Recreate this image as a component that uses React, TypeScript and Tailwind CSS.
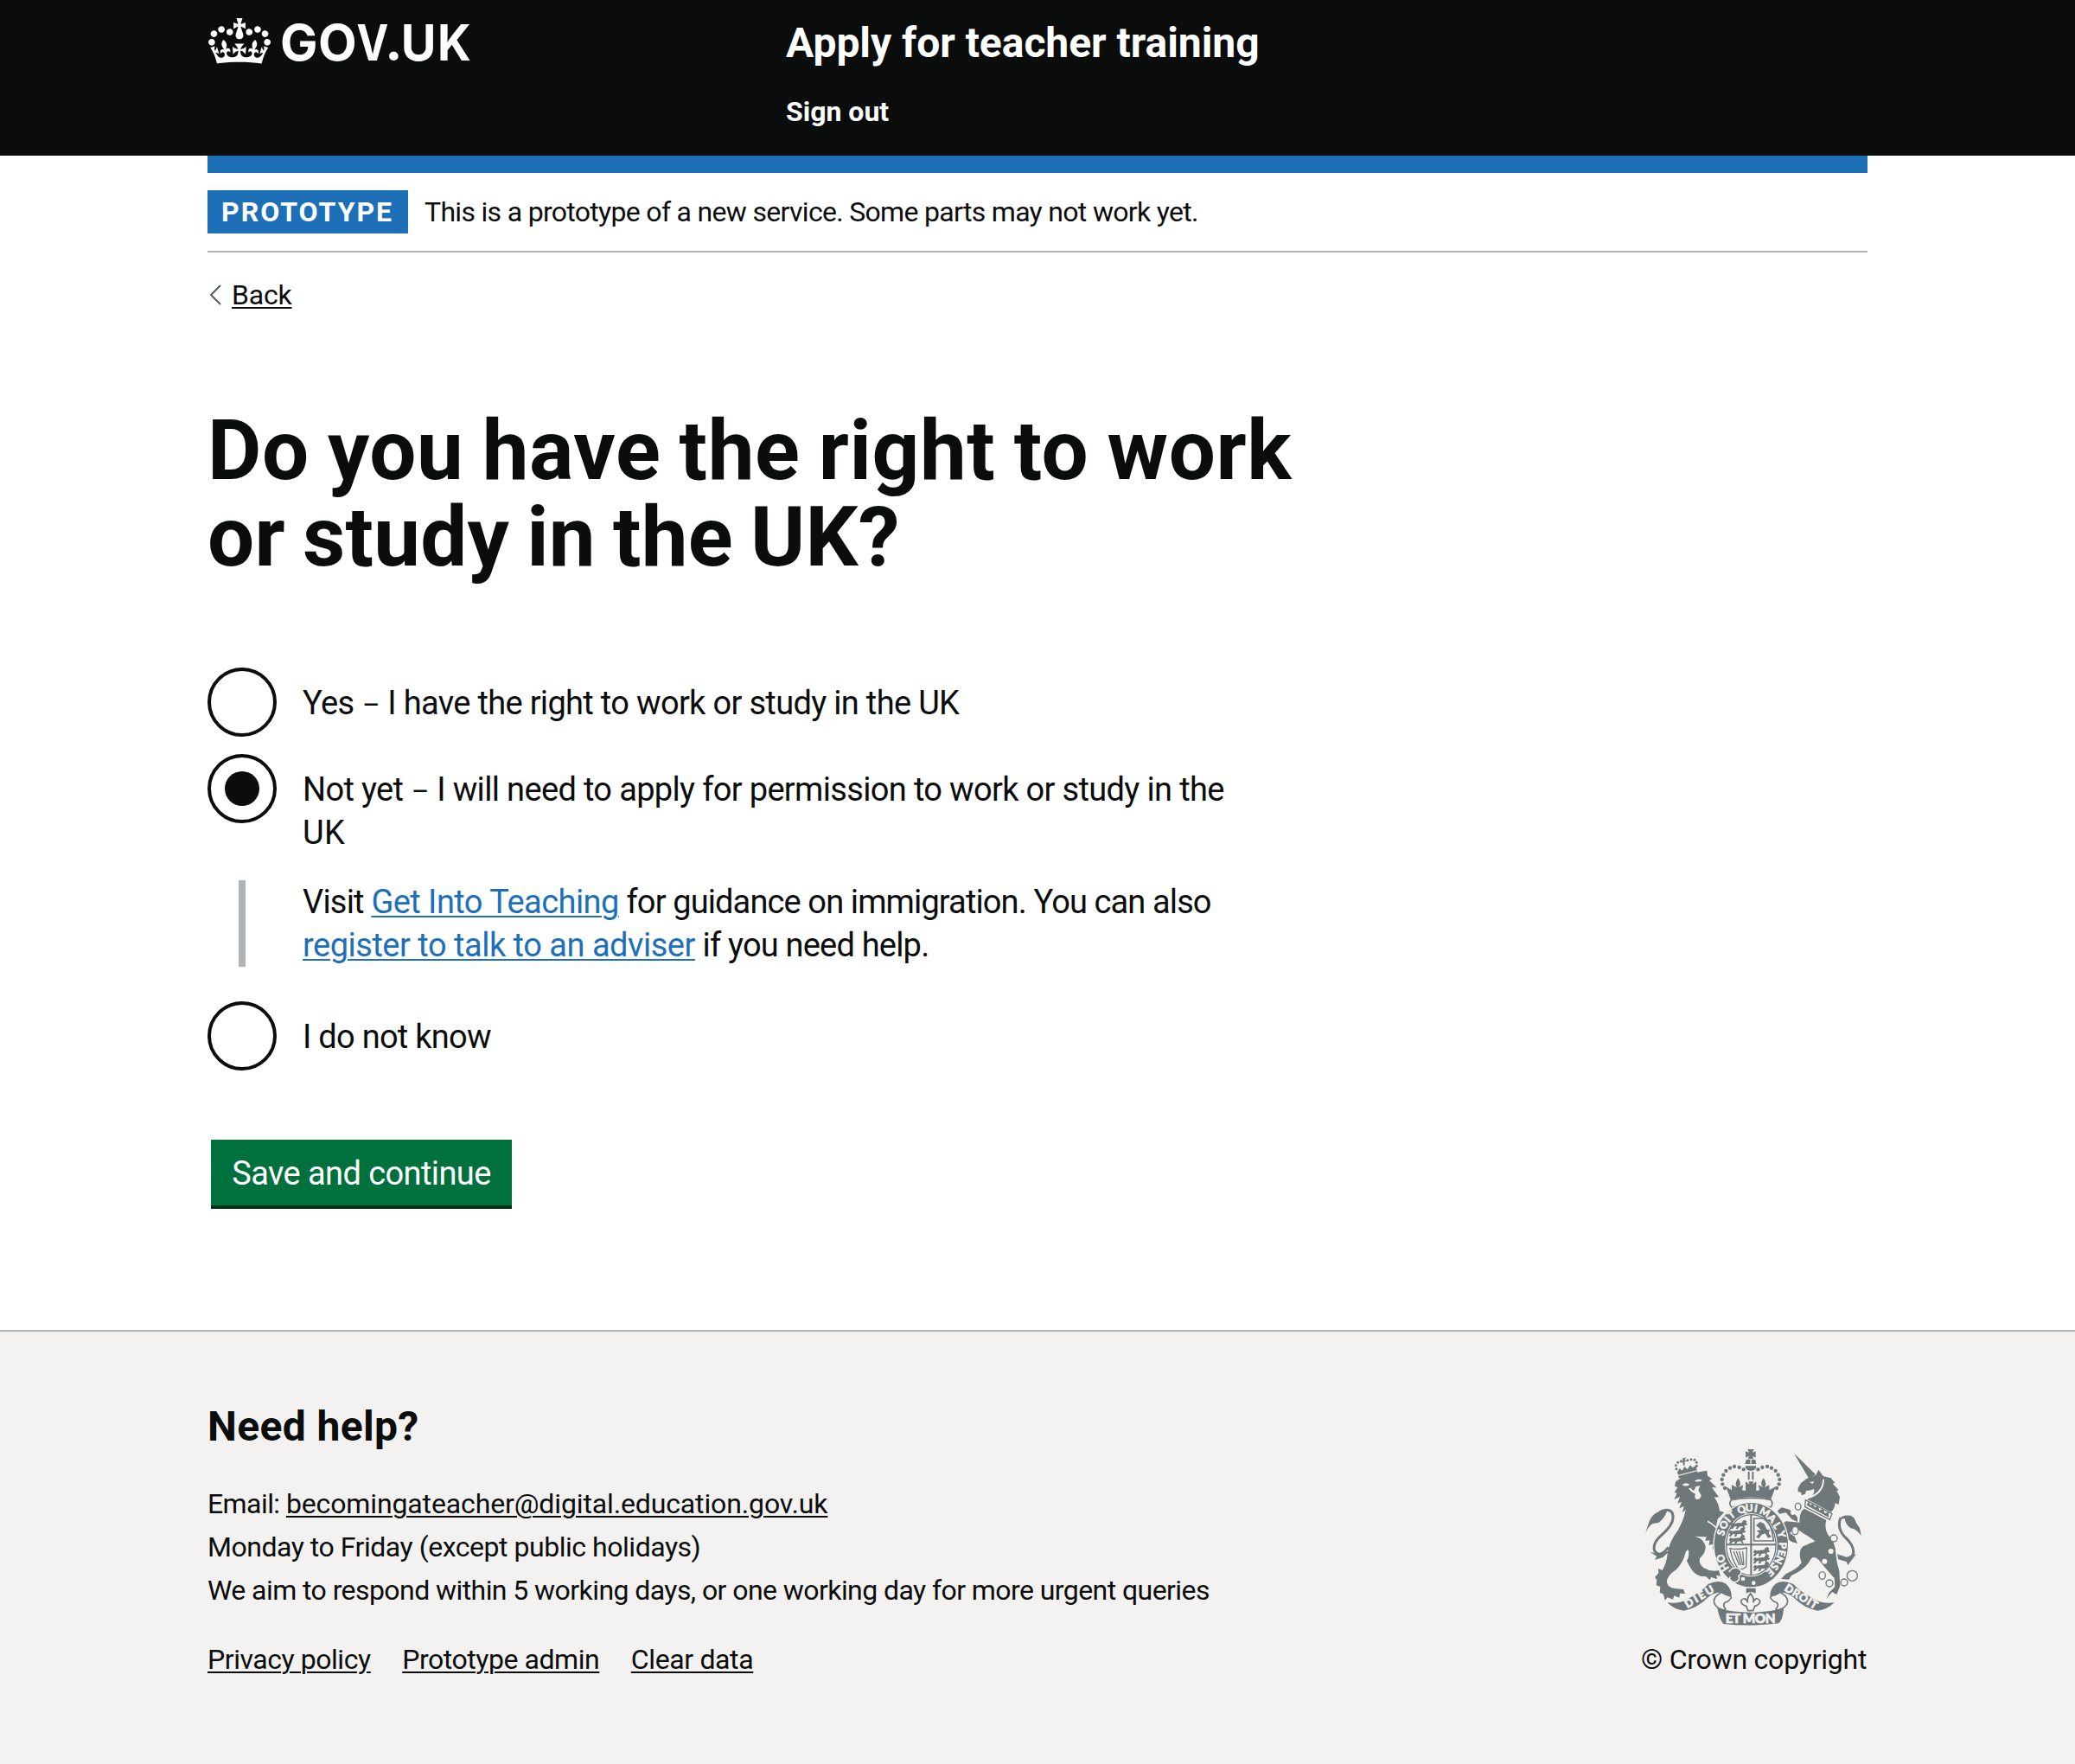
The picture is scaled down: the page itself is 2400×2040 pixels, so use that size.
import type { ReactNode } from "react";

function GovukCrown() {
  return (
    <svg viewBox="0 0 132 97" className="h-[53px] w-[72px]" fill="currentColor" aria-hidden="true">
      <path d="M25 30.2c3.5 1.5 7.7-.2 9.1-3.7 1.5-3.6-.2-7.8-3.9-9.2-3.6-1.4-7.6.3-9.1 3.9-1.4 3.5.3 7.5 3.9 9zM9 39.5c3.6 1.5 7.8-.2 9.2-3.7 1.5-3.6-.2-7.8-3.9-9.1-3.6-1.5-7.6.2-9.1 3.8-1.4 3.5.3 7.5 3.8 9zM4.4 57.2c3.5 1.5 7.7-.2 9.1-3.8 1.5-3.6-.2-7.7-3.9-9.1-3.5-1.5-7.6.3-9.1 3.8-1.4 3.5.3 7.6 3.9 9.1zm38.3-21.4c3.5 1.5 7.7-.2 9.1-3.8 1.5-3.6-.2-7.7-3.9-9.1-3.6-1.5-7.6.3-9.1 3.8-1.3 3.6.4 7.7 3.9 9.1zm64.4-5.6c-3.6 1.5-7.8-.2-9.1-3.7-1.5-3.6.2-7.8 3.8-9.2 3.6-1.4 7.7.3 9.2 3.9 1.3 3.5-.4 7.5-3.9 9zm15.9 9.3c-3.6 1.5-7.7-.2-9.1-3.7-1.5-3.6.2-7.8 3.7-9.1 3.6-1.5 7.7.2 9.2 3.8 1.5 3.5-.3 7.5-3.8 9zm4.7 17.7c-3.6 1.5-7.8-.2-9.2-3.8-1.5-3.6.2-7.7 3.9-9.1 3.6-1.5 7.7.3 9.2 3.8 1.3 3.5-.4 7.6-3.9 9.1zM89.3 35.8c-3.6 1.5-7.8-.2-9.2-3.8-1.4-3.6.2-7.7 3.9-9.1 3.6-1.5 7.7.3 9.2 3.8 1.4 3.6-.3 7.7-3.9 9.1zM69.7 17.7l8.9 4.7V9.3l-8.9 2.8c-.2-.3-.5-.6-.9-.9L72.4 0H59.6l3.5 11.2c-.3.3-.6.5-.9.9l-8.8-2.8v13.1l8.8-4.7c.3.3.6.7.9.9l-5 15.4v.1c-.2.8-.4 1.6-.4 2.4 0 4.1 3.1 7.5 7 8.1h.2c.3 0 .7.1 1 .1.4 0 .7 0 1-.1h.2c4-.6 7.1-4.1 7.1-8.1 0-.8-.1-1.7-.4-2.4V34l-5.1-15.4c.4-.2.7-.6 1-.9zM66 92.8c16.9 0 32.8 1.1 47.1 3.2 4-16.9 8.9-26.7 14-33.5l-9.6-3.4c1 4.9 1.1 7.2 0 10.2-1.5-1.4-3-4.3-4.2-8.7L108.6 76c2.8-2 5-3.2 7.5-3.3-4.4 9.4-10 11.9-13.6 11.2-4.3-.8-6.3-4.6-5.6-7.9 1-4.7 5.7-5.9 8-.5 4.3-8.7-3-11.4-7.6-8.8 7.1-7.2 7.9-13.5 2.1-21.1-8 6.1-8.1 12.3-4.5 20.8-4.7-5.4-12.1-2.5-9.5 6.2 3.4-5.2 7.9-2 7.2 3.1-.6 4.3-6.4 7.8-13.5 7.2-10.3-.9-10.9-8-11.2-13.8 2.5-.5 7.1 1.8 11 7.3L80.2 60c-4.1 4.4-8 5.3-12.3 5.4 1.4-4.4 8-11.6 8-11.6H55.5s6.4 7.2 7.9 11.6c-4.2-.1-8-1-12.3-5.4l1.4 16.4c3.9-5.5 8.5-7.7 10.9-7.3-.3 5.8-.9 12.8-11.1 13.8-7.2.6-12.9-2.9-13.5-7.2-.7-5 3.8-8.3 7.1-3.1 2.7-8.7-4.6-11.6-9.4-6.2 3.7-8.5 3.6-14.7-4.6-20.8-5.8 7.6-5 13.9 2.2 21.1-4.7-2.6-11.9.1-7.7 8.8 2.3-5.5 7.1-4.2 8.1.5.7 3.3-1.3 7.1-5.7 7.9-3.5.7-9-1.8-13.5-11.2 2.5.1 4.7 1.3 7.5 3.3l-4.7-15.4c-1.2 4.4-2.7 7.2-4.3 8.7-1.1-3-.9-5.3 0-10.2l-9.5 3.4c5 6.9 9.9 16.7 14 33.5 14.8-2.1 30.8-3.2 47.7-3.2z" />
    </svg>
  );
}

function GovukWordmark() {
  return (
    <svg
      viewBox="0 0 240 80"
      className="h-20 w-60 overflow-visible"
      fill="currentColor"
      fontFamily="Inter, sans-serif"
      fontWeight="700"
      fontSize="58"
    >
      <text y="49" x="2 46">GO</text>
      <text transform="translate(90.5 49) scale(.85 1)">V</text>
      <text x="125.7" y="49" fontFamily="Lato, sans-serif" fontWeight="900" fontSize="64">.</text>
      <text transform="translate(141.8 49) scale(.96 1)">U</text>
      <text transform="translate(184 49) scale(.93 1)">K</text>
    </svg>
  );
}

// Motto letters round the garter: glyph, centre x, centre y.
const MOTTO: [string, number, number][] = [
  ["H", 345, 457], ["O", 334, 427],
  ["S", 334, 337], ["O", 344, 310], ["I", 357, 291], ["T", 371, 275],
  ["Q", 406, 257], ["U", 433, 251], ["I", 456, 253],
  ["M", 487, 266], ["A", 512, 288], ["L", 530, 313], ["Y", 545, 343],
  ["P", 549, 382], ["E", 545, 408], ["N", 536, 432], ["S", 521, 455], ["E", 506, 475],
];

const CROWN_PEARLS = [
  [413, 118], [398, 111], [381, 108], [366, 113], [352, 123], [343, 137], [338, 153], [340, 169], [348, 183],
];

const LION_CROWN_PEARLS = [
  [188, 128], [180, 116], [178, 104], [185, 94], [196, 89], [219, 86], [231, 83], [243, 85], [250, 94], [250, 106],
];

function Passant({ x, y }: { x: number; y: number }) {
  return (
    <path
      transform={`translate(${x} ${y})`}
      d="M0 6l5-9 8 3 12-2 14-1 3-7 8-3 6 5-3 6 6 3-5 5-5-1-2 6 6 4-7 3-5-9-12 2-4 8-7-1 4-8-8 0-7 9-7-2 5-8z"
      fill="#6e777a"
    />
  );
}

function RoyalArms() {
  const ink = "#6e777a";
  const bg = "#f3f2f1";
  return (
    <svg viewBox="57 45 780 618" className="h-[206px] w-[260px]" fill={ink} aria-hidden="true">
      {/* lion */}
      <path d="M178 160L200 145 262 126 286 122 288 140 304 151 294 156 319 181 303 181 327 214 311 215Q326 232 330 262L346 267 323 290 318 315 334 345 348 375 345 402 318 410 322 398 305 394 308 378 292 380 296 364 280 366 284 352 268 352 244 350Q274 358 281 385 282 408 262 425 255 445 275 460 300 475 327 468L333 488 318 485 322 499 300 492 296 502 283 490 263 488Q240 480 228 458L216 436Q226 418 222 398 214 395 210 412 204 440 180 465 145 488 147 510 150 528 176 531L204 534 210 549 192 548 190 563 172 556 168 569 150 562 140 572 135 551 122 545 124 525 110 520 112 502 105 492 118 478 117 462 131 468Q147 440 149 410 155 368 185 330 207 290 212 258L200 268 206 246 190 253 198 230 184 236 192 213 172 222 182 200 173 198 184 180 174 176Z" />
      <g fill={bg}>
        <path d="M200 172Q212 160 226 170 214 180 200 172ZM243 158Q256 148 270 156 256 164 243 158Z" />
        <path d="M222 184L262 174 256 190 266 208Q264 223 250 222 240 216 246 203L232 196Z" />
      </g>
      <path d="M228 182L248 178 240 192Z" />
      <path d="M288 298Q315 312 345 350" fill="none" stroke={bg} strokeWidth="5" />
      <path d="M152 388Q122 428 104 400 96 374 128 346 180 302 165 268 152 250 120 268" fill="none" stroke={ink} strokeWidth="9" />
      <path d="M72 340L86 298Q98 268 128 261L150 256Q140 288 118 303L98 306Q82 315 72 340ZM88 404L120 412 160 398 132 424 104 432 112 420Z" />
      <path d="M183 128L191 114 200 122 208 108 218 118 228 103 236 112 248 104 251 121 187 137ZM186 141L252 124 254 131 190 149Z" />
      <path d="M200 80L213 76 209 86 218 88 208 92 210 103 203 104 203 94 194 94 203 87Z" />
      {LION_CROWN_PEARLS.map(([x, y]) => <circle key={`${x}-${y}`} cx={x} cy={y} r="4.5" />)}

      {/* unicorn */}
      <path d="M588 62L663 136 640 150Z" />
      <path d="M602 182L612 165 632 150 664 138 673 119 690 142 716 148 730 165 722 167 743 190 736 192 747 214 743 240 731 234Q729 256 716 266L634 222Q662 206 658 186 645 192 630 192L627 203 614 208 613 198 602 195Z" />
      <path d="M642 162L658 160 652 168Z" fill={bg} />
      <path d="M634 217Q690 202 690 152" fill="none" stroke={bg} strokeWidth="6" />
      <path d="M628 224L720 272 712 292 626 248Z" fill={bg} stroke={ink} strokeWidth="4" />
      <path d="M632 242L638 228 645 242 654 236 660 250 672 244 676 260 690 254 694 270 708 266 708 284Z" />
      <path d="M624 254L700 294Q692 322 706 345 732 370 733 410 735 440 745 470L748 522 736 552 720 543 700 567 710 545 730 525 728 495Q704 470 674 432 652 410 640 440 620 468 580 485L570 500 543 498 560 480Q600 464 614 442 600 400 620 385 645 372 662 368 640 350 620 340 600 325 588 316L574 340 590 350 600 375 578 368 560 352 548 335 543 310 560 298 608 302Q605 280 615 262Z" />
      <path d="M530 262L545 250 572 257 590 272 600 284 600 300 580 290 560 268 538 272Z" />
      <path d="M750 285Q736 318 762 350 800 384 793 412 780 438 745 425" fill="none" stroke={ink} strokeWidth="9" />
      <path d="M745 292Q752 274 785 278 800 286 803 302L816 322 821 348Q804 324 785 322 765 308 764 288ZM738 412L770 422 804 412 790 430 775 450 770 438 742 430Z" />
      <g fill="none" stroke={ink} strokeWidth="4">
        <ellipse cx="602" cy="247" rx="10" ry="12" />
        <ellipse cx="592" cy="330" rx="11" ry="14" fill={bg} />
        <circle cx="726" cy="357" r="12" fill={bg} />
        <ellipse cx="686" cy="486" rx="11" ry="13" />
        <circle cx="711" cy="513" r="12" />
        <circle cx="762" cy="510" r="12" />
        <circle cx="790" cy="487" r="18" />
      </g>
      <g fill={bg}>
        <circle cx="716" cy="402" r="9" />
        <circle cx="694" cy="437" r="9" />
        <circle cx="584" cy="268" r="8" />
      </g>

      {/* central crown */}
      <path d="M427 48H449L444 60 455 55V77L444 71 448 82H428L432 71 420 77V55L432 60ZM422 84H454L457 99H418Z" />
      <path d="M436 84h4v14h-4z" fill={bg} />
      <path d="M419 106H457Q457 122 438 123 419 122 419 106ZM428 126h6v28h-6zM442 126h6v28h-6z" />
      {CROWN_PEARLS.map(([x, y]) => (
        <g key={`${x}-${y}`}>
          <circle cx={x} cy={y} r="6.5" />
          <circle cx={876 - x} cy={y} r="6.5" />
        </g>
      ))}
      <path d="M394 148Q408 168 396 180L412 172 408 190 420 192V160L434 170 430 160H448L444 170 457 160V192L468 190 464 172 480 180Q468 168 482 148 496 168 486 180L502 172 502 190 524 178 508 222Q438 206 368 222L352 178 372 190 372 172 390 180Q380 168 394 148Z" />
      <path d="M370 224Q438 210 508 224 518 238 506 250 438 226 372 250 360 238 370 224Z" fill={bg} stroke={ink} strokeWidth="5" />

      {/* garter and shield */}
      <ellipse cx="439" cy="380" rx="132" ry="150" fill={bg} />
      <ellipse cx="439" cy="380" rx="128" ry="146" />
      <ellipse cx="439" cy="380" rx="91" ry="110" fill={bg} />
      <ellipse cx="439" cy="380" rx="86" ry="105" fill="none" stroke={ink} strokeWidth="4" />
      <path d="M436 274h6v212h-6zM352 376h174v6H352z" />
      <Passant x={368} y={306} />
      <Passant x={362} y={332} />
      <Passant x={362} y={358} />
      <Passant x={446} y={400} />
      <Passant x={446} y={426} />
      <Passant x={446} y={452} />
      <path d="M449 288H486Q512 308 517 366H449Z" fill="none" stroke={ink} strokeWidth="5" />
      <path d="M456 312L470 300 484 306 494 326 504 328 500 340 510 352 498 356 488 340 476 344 466 358 456 352 468 340 458 330 474 328Z" />
      <path d="M366 392Q392 398 424 390L422 456Q404 470 392 460 372 430 366 392ZM378 402L398 450M388 402L404 450M398 402L410 450M410 402L414 450" fill="none" stroke={ink} strokeWidth="4" />
      <g fill={bg} stroke={bg} strokeWidth="1.5" fontFamily="Lato, sans-serif" fontWeight="900" fontSize="36" textAnchor="middle">
        {MOTTO.map(([ch, x, y]) => (
          <text
            key={`${x}-${y}`}
            transform={`translate(${x} ${y}) rotate(${(Math.atan2(x - 439, (380 - y) / 1.25) * 180) / Math.PI})`}
            y="13"
          >
            {ch}
          </text>
        ))}
      </g>
      <path d="M362 474Q376 452 400 464 412 476 396 488 404 504 380 510 360 502 366 490" fill={ink} stroke={bg} strokeWidth="5" />
      <circle cx="411" cy="498" r="7" fill={bg} />
      <circle cx="448" cy="512" r="7" fill={bg} />
      <path d="M422 530H455V548Q438 538 422 548Z" />
      <path d="M437 548Q452 566 446 580 456 556 470 574 470 588 452 592L446 608H428L422 592Q404 588 404 574 418 556 428 580 422 566 437 548Z" fill={bg} stroke={ink} strokeWidth="5" />

      {/* ribbon */}
      <path d="M148 580Q190 586 222 566 270 540 290 516 330 498 352 515 372 532 371 562 350 556 332 545 308 545 290 562 250 602 205 608 172 604 148 580Z" />
      <path d="M728 580Q686 586 654 566 606 540 586 516 546 498 524 515 504 532 505 562 526 556 544 545 568 545 586 562 626 602 671 608 704 604 728 580Z" />
      <path d="M334 546Q304 562 312 584 324 606 352 606M371 560Q366 574 348 580 338 590 352 604M542 546Q572 562 564 584 552 606 524 606M505 560Q510 574 528 580 538 590 524 604" fill="none" stroke={ink} strokeWidth="5" />
      <path d="M322 600Q438 628 552 600 550 640 534 652 438 664 343 654 330 640 322 600Z" />
      <g fill={bg} stroke={bg} strokeWidth="2" fontFamily="Lato, sans-serif" fontWeight="900" textAnchor="middle">
        <text x="437" y="650" fontSize="46" textLength="174">ET MON</text>
        <text transform="translate(266 571) rotate(-31)" fontSize="38" textLength="112">DIEU</text>
        <text transform="translate(606 570) rotate(32)" fontSize="38" textLength="128">DROIT</text>
      </g>
    </svg>
  );
}

function Radio({ checked = false, children }: { checked?: boolean; children: ReactNode }) {
  return (
    <label className="flex gap-[30px]">
      <span className="flex size-20 shrink-0 items-center justify-center rounded-full border-4 border-[#0b0c0c]">
        {checked && <span className="size-10 rounded-full bg-[#0b0c0c]" />}
      </span>
      <span className="pt-4 text-[38px] leading-[50px]">{children}</span>
    </label>
  );
}

function Dash() {
  return <span className="font-['Lato',sans-serif] leading-none">–</span>;
}

export default function App() {
  return (
    <div className="min-h-[2040px] bg-white font-['Roboto',sans-serif] text-[#0b0c0c]">
      <header className="h-[180px] bg-[#0b0c0c] text-white">
        <div className="mx-auto flex w-[1920px]">
          <a className="flex w-[669px] gap-[9px] pt-[21px] pl-px">
            <GovukCrown />
            <GovukWordmark />
          </a>
          <div className="pt-5 font-bold">
            <p className="text-5xl leading-[60px] tracking-[-0.04px]">Apply for teacher training</p>
            <p className="mt-[29px] text-[32px] leading-10">Sign out</p>
          </div>
        </div>
      </header>

      <div className="mx-auto w-[1920px]">
        <div className="h-5 bg-[#1d70b8]" />
        <div className="flex items-center gap-[19px] border-b-2 border-[#b1b4b6] py-5">
          <strong className="h-[50px] w-[232px] bg-[#1d70b8] pl-4 text-[32px] leading-[50px] font-bold tracking-[2px] text-white">PROTOTYPE</strong>
          <span className="text-[32px] leading-10 tracking-[-0.69px]">This is a prototype of a new service. Some parts may not work yet.</span>
        </div>

        <a className="mt-[29px] flex h-10 items-center">
          <svg viewBox="0 0 14 24" className="mr-3 ml-[2px] h-6 w-[14px]" fill="none" stroke="#505a5f" strokeWidth="2">
            <path d="M13 1 2 12l11 11" />
          </svg>
          <span className="text-[32px] leading-10 tracking-[-0.2px] underline decoration-2 underline-offset-[3px]">Back</span>
        </a>

        <main className="pt-[110px]">
          <h1 className="text-[96px] leading-[100px] font-bold">
            <span className="tracking-[0.6px] [word-spacing:-3.2px]">Do you have the right to work</span>
            <br />
            <span className="tracking-[0.2px] [word-spacing:-3.8px]">or study in the UK?</span>
          </h1>

          <div className="mt-[101px] flex w-[1270px] flex-col">
            <Radio>
              <span className="tracking-[-0.67px]">Yes <Dash /> I have the right to work or study in the UK</span>
            </Radio>
            <div className="mt-5">
              <Radio checked>
                <span className="tracking-[-0.66px]">Not yet <Dash /> I will need to apply for permission to work or study in the</span>
                <br />
                <span className="tracking-[0.3px]">UK</span>
              </Radio>
            </div>
            <div className="mt-[30px] ml-9 border-l-8 border-[#b1b4b6] pl-[66px] text-[38px] leading-[50px] tracking-[-0.8px]">
              Visit{" "}
              <a className="tracking-[-0.54px] text-[#1d70b8] underline decoration-[2.4px] underline-offset-[3px]">Get Into Teaching</a>{" "}
              <span className="tracking-[-0.88px]">for guidance on immigration. You can also</span>
              <br />
              <a className="tracking-[-0.49px] text-[#1d70b8] underline decoration-[2.4px] underline-offset-[3px]">register to talk to an adviser</a>{" "}
              if you need help.
            </div>
            <div className="mt-10">
              <Radio><span className="tracking-[-0.73px]">I do not know</span></Radio>
            </div>
          </div>

          <button className="mt-20 ml-1 block h-20 w-[348px] border-b-4 border-[#002d18] bg-[#00703c] pt-px text-[38px] leading-[76px] tracking-[-0.59px] text-white">
            Save and continue
          </button>
        </main>
      </div>

      <footer className="mt-[140px] h-[502px] border-t-2 border-[#b1b4b6] bg-[#f3f2f1] pt-20">
        <div className="mx-auto flex w-[1920px] justify-between">
          <div className="text-[32px] leading-[50px] tracking-[-0.57px]">
            <h2 className="text-5xl leading-[60px] font-bold tracking-[0.35px]">Need help?</h2>
            <p className="mt-[34px]">
              Email:{" "}
              <a className="tracking-[-0.13px] underline decoration-2 underline-offset-[3px]">becomingateacher@digital.education.gov.uk</a>
            </p>
            <p className="tracking-[-0.47px]">Monday to Friday (except public holidays)</p>
            <p>We aim to respond within 5 working days, or one working day for more urgent queries</p>
            <ul className="mt-[30px] flex gap-[36.5px] tracking-[-0.45px]">
              <li><a className="underline decoration-2 underline-offset-[3px]">Privacy policy</a></li>
              <li><a className="underline decoration-2 underline-offset-[3px]">Prototype admin</a></li>
              <li><a className="tracking-[-0.36px] underline decoration-2 underline-offset-[3px]">Clear data</a></li>
            </ul>
          </div>
          <div className="flex w-[262px] flex-col items-start pt-[55px]">
            <RoyalArms />
            <p className="mt-[13px] text-[32px] leading-[50px] tracking-[-0.22px]">© Crown copyright</p>
          </div>
        </div>
      </footer>
    </div>
  );
}
